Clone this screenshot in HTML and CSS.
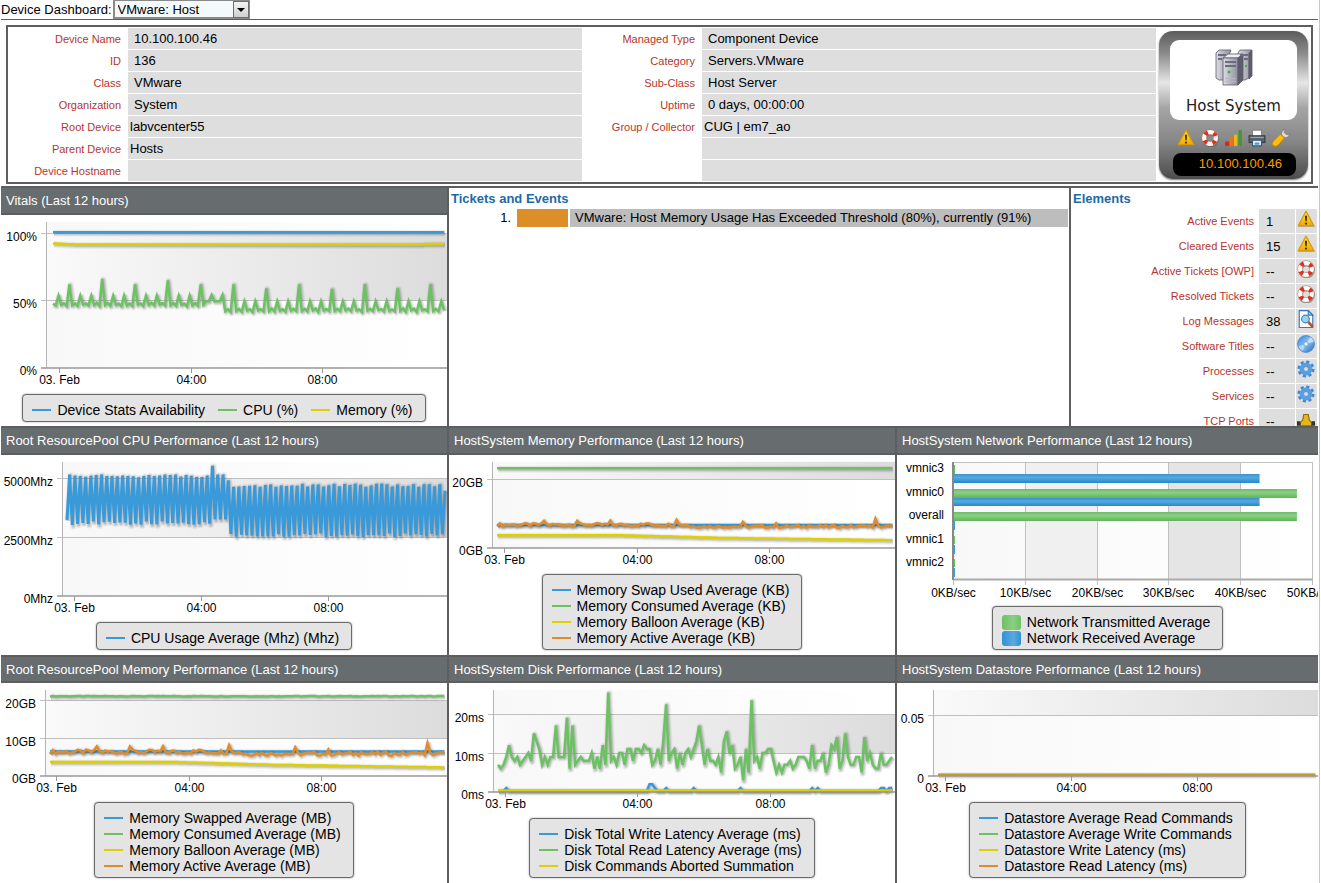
FILE: index.html
```
<!DOCTYPE html>
<html lang="en">
<head>
  <meta charset="UTF-8">
  <title>Device Dashboard</title>
  <link rel="stylesheet" href="styles.css">
</head>
<body>

  <!-- icons -->
  <svg class="defs" width="0" height="0">
    <defs>
      <linearGradient id="gold" x1="0" y1="0" x2="0" y2="1">
        <stop offset="0" stop-color="#ffe34a"/><stop offset="1" stop-color="#f0a800"/>
      </linearGradient>
      <linearGradient id="blue" x1="0" y1="0" x2="1" y2="1">
        <stop offset="0" stop-color="#2f7fd6"/><stop offset="0.5" stop-color="#8cc4f5"/><stop offset="1" stop-color="#1f63b8"/>
      </linearGradient>
      <linearGradient id="case" x1="0" y1="0" x2="1" y2="0">
        <stop offset="0" stop-color="#dcdce4"/><stop offset="1" stop-color="#8f8f9f"/>
      </linearGradient>
      <linearGradient id="plot">
        <stop offset="0" stop-color="#f8f8f8"/><stop offset="1" stop-color="#ffffff"/>
      </linearGradient>
      <linearGradient id="band">
        <stop offset="0" stop-color="#fafafa"/><stop offset="1" stop-color="#dcdcdc"/>
      </linearGradient>
      <linearGradient id="barGreen" x1="0" y1="0" x2="0" y2="1">
        <stop offset="0" stop-color="#6dbb66"/><stop offset="0.4" stop-color="#8bcf84"/><stop offset="1" stop-color="#5fb458"/>
      </linearGradient>
      <linearGradient id="barBlue" x1="0" y1="0" x2="0" y2="1">
        <stop offset="0" stop-color="#3a94d2"/><stop offset="0.4" stop-color="#57a9de"/><stop offset="1" stop-color="#2389cb"/>
      </linearGradient>
    </defs>
    <symbol id="i-warn" viewBox="0 0 16 16">
      <path d="M1 15h15L9 2z" fill="#777" opacity=".5"/>
      <path d="M8 1 15 14H1z" fill="url(#gold)" stroke="#d99a00" stroke-linejoin="round"/>
      <path d="M7 5h2l-.4 5H7.400z" fill="#4a3500"/><circle cx="8" cy="12" r="1" fill="#4a3500"/>
    </symbol>
    <symbol id="i-ring" viewBox="0 0 16 16">
      <circle cx="8.500" cy="8.900" r="5.300" fill="none" stroke="#555" stroke-width="4.400" opacity=".5"/>
      <circle cx="8" cy="8" r="5.200" fill="none" stroke="#8a7d74" stroke-width="4.600"/>
      <circle cx="8" cy="8" r="5.200" fill="none" stroke="#fffaf2" stroke-width="3.800"/>
      <circle cx="8" cy="8" r="5.200" fill="none" stroke="#e32d20" stroke-width="4" stroke-dasharray="3 5.168" stroke-dashoffset="-2.580"/>
    </symbol>
    <symbol id="i-bars" viewBox="0 0 16 16">
      <rect x="0" y="11" width="4" height="4" rx="1" fill="#d32a1a"/>
      <rect x="4" y="8" width="3" height="7" fill="#e8741c"/>
      <rect x="8" y="5" width="3" height="10" fill="#efb41c"/>
      <rect x="12" y="1" width="3" height="14" fill="#3f9a2c"/>
    </symbol>
    <symbol id="i-print" viewBox="0 0 16 16">
      <path d="M4 1h8v6H4z" fill="#fff" stroke="#888"/>
      <path d="M1 6h14v6H1z" fill="#5a6370" stroke="#333b45"/>
      <path d="M2 7h12v1H2z" fill="#9aa4b0"/>
      <path d="M4 10h8v5H4z" fill="#e6f3ff" stroke="#456"/>
      <path d="M6 12h4v2H6z" fill="#3da0dd"/>
    </symbol>
    <symbol id="i-wrench" viewBox="0 0 16 16">
      <path d="M15.500 4.500a3.500 3.500 0 0 1-5 2.800L8.700 5.500A3.500 3.500 0 0 1 12 .6L10.800 3l2 2z" fill="#ddd" stroke="#777" stroke-width=".7"/>
      <path d="M7.500 4.500 11 8 5.500 14.500Q3 16.500 1 14.600T1.500 10.500z" fill="#f8bd12" stroke="#b97a00" stroke-width=".7"/>
    </symbol>
    <symbol id="i-log" viewBox="0 0 16 16">
      <path d="M2 .5h8l4 4v11H2z" fill="#fff" stroke="#3a76b8"/>
      <path d="M10 .5v4h4z" fill="#a9cdf0" stroke="#3a76b8"/>
      <circle cx="7.500" cy="8" r="3.400" fill="#9fd0f2" stroke="#3c83bf"/>
      <path d="m10 10.500 4 4.500" stroke="#b5562a" stroke-width="2.500"/>
    </symbol>
    <symbol id="i-disc" viewBox="0 0 16 16">
      <circle cx="8" cy="8" r="7.500" fill="url(#blue)" stroke="#3c78bd" stroke-width=".6"/>
      <path d="M8 8 12 2a7 7 0 0 1 3 4z" fill="#d6ebfc" opacity=".8"/><path d="M8 8 1.500 10A7 7 0 0 0 5 14z" fill="#d6ebfc" opacity=".6"/>
      <circle cx="8" cy="8" r="2" fill="#e9f2fa" stroke="#5b92cc" stroke-width=".7"/>
    </symbol>
    <symbol id="i-gear" viewBox="0 0 16 16">
      <circle cx="8" cy="8" r="6.300" fill="none" stroke="#3f86d0" stroke-width="2.600" stroke-dasharray="2.700 2.248"/>
      <circle cx="8" cy="8" r="4" fill="none" stroke="#559fe6" stroke-width="3.400"/>
      <circle cx="8" cy="8" r="2.200" fill="#dedede" stroke="#3272b8" stroke-width=".6"/>
    </symbol>
    <symbol id="i-port" viewBox="0 0 16 16">
      <path d="M0 11h16v2H0z" fill="#777"/>
      <path d="M6 4h4l1 5 2 2v3H3v-3l2-2z" fill="#e5b71a" stroke="#8c6a10"/>
      <path d="M0 10h3v4H0zM13 10h3v4h-3z" fill="#333"/>
    </symbol>
    <symbol id="i-server" viewBox="0 0 38 38">
      <g stroke="#5b5b68" stroke-width=".8" stroke-linejoin="round">
        <path d="M1 4 4 1h12l-2 5v25H4l-3-2z" fill="url(#case)"/>
        <path d="M23 4 25 1h12l-3 3v25l-4 2h-7z" fill="url(#case)"/>
        <path d="m34 4 3-3v26l-3 3z" fill="#5c5c6c"/>
        <path d="m8 9 5-4h15l-5 4z" fill="#eeeef4"/>
        <path d="M8 9h15v27H8z" fill="url(#case)"/>
        <path d="m23 9 5-4v26l-5 5z" fill="#5c5c6c"/>
      </g>
      <path d="M10 12h11v2H10zM10 16h11v2H10zM3 5h8v2H3zM25 5h8v2h-8zM3 9h4v2H3zM29 9h4v2h-4z" fill="#6c6c80"/>
      <path d="M10 29h11v1H10zM10 32h11v1H10z" fill="#b5b5c4"/>
      <circle cx="14" cy="23" r="1.500" fill="#3cb42c"/><circle cx="31" cy="17" r="1.200" fill="#3cb42c"/>
    </symbol>
  </svg>

  <form class="topbar">
    <label for="dashboard">Device Dashboard:</label>
    <span class="picker">
      <select id="dashboard" name="dashboard">
        <option selected>VMware: Host</option>
      </select>
    </span>
  </form>

  <!-- device summary -->
  <div class="summary">
    <table class="info">
      <tr><th scope="row">Device Name</th><td>10.100.100.46</td></tr>
      <tr><th scope="row">ID</th><td>136</td></tr>
      <tr><th scope="row">Class</th><td>VMware</td></tr>
      <tr><th scope="row">Organization</th><td>System</td></tr>
      <tr><th scope="row">Root Device</th><td class="link"><a href="#">labvcenter55</a></td></tr>
      <tr><th scope="row">Parent Device</th><td class="link"><a href="#">Hosts</a></td></tr>
      <tr><th scope="row">Device Hostname</th><td></td></tr>
    </table>
    <table class="info">
      <tr><th scope="row">Managed Type</th><td>Component Device</td></tr>
      <tr><th scope="row">Category</th><td>Servers.VMware</td></tr>
      <tr><th scope="row">Sub-Class</th><td>Host Server</td></tr>
      <tr><th scope="row">Uptime</th><td>0 days, 00:00:00</td></tr>
      <tr><th scope="row">Group / Collector</th><td class="link">CUG | em7_ao</td></tr>
      <tr><th></th><td></td></tr>
      <tr><th></th><td></td></tr>
    </table>
    <div class="device">
      <div class="device-card">
        <svg width="38" height="38"><use href="#i-server"/></svg>
        <span>Host System</span>
      </div>
      <div class="device-tools">
        <a href="#" aria-label="Events"><svg class="icon"><use href="#i-warn"/></svg></a>
        <a href="#" aria-label="Tickets"><svg class="icon"><use href="#i-ring"/></svg></a>
        <a href="#" aria-label="Performance"><svg class="icon"><use href="#i-bars"/></svg></a>
        <a href="#" aria-label="Print"><svg class="icon"><use href="#i-print"/></svg></a>
        <a href="#" aria-label="Tools"><svg class="icon"><use href="#i-wrench"/></svg></a>
      </div>
      <div class="device-ip">10.100.100.46</div>
    </div>
  </div>

  <!-- row 1 -->
  <div class="row row-top">
    <div class="panel">
      <h2>Vitals (Last 12 hours)</h2>
      <svg class="chart chart-tall" id="vitals"></svg>
      <ul class="legend inline">
        <li class="c-blue">Device Stats Availability</li>
        <li class="c-green">CPU (%)</li>
        <li class="c-yellow">Memory (%)</li>
      </ul>
    </div>
    <div class="panel">
      <h3>Tickets and Events</h3>
      <ol class="events">
        <li><span class="num">1.</span><span class="severity"></span><a href="#">VMware: Host Memory Usage Has Exceeded Threshold (80%), currently (91%)</a></li>
      </ol>
    </div>
    <div class="panel">
      <h3>Elements</h3>
      <div class="scroll">
        <table class="elements">
          <tr><th scope="row">Active Events</th><td>1</td><td class="ico"><svg class="icon"><use href="#i-warn"/></svg></td></tr>
          <tr><th scope="row">Cleared Events</th><td>15</td><td class="ico"><svg class="icon"><use href="#i-warn"/></svg></td></tr>
          <tr><th scope="row">Active Tickets [OWP]</th><td>--</td><td class="ico"><svg class="icon"><use href="#i-ring"/></svg></td></tr>
          <tr><th scope="row">Resolved Tickets</th><td>--</td><td class="ico"><svg class="icon"><use href="#i-ring"/></svg></td></tr>
          <tr><th scope="row">Log Messages</th><td>38</td><td class="ico"><svg class="icon"><use href="#i-log"/></svg></td></tr>
          <tr><th scope="row">Software Titles</th><td>--</td><td class="ico"><svg class="icon"><use href="#i-disc"/></svg></td></tr>
          <tr><th scope="row">Processes</th><td>--</td><td class="ico"><svg class="icon"><use href="#i-gear"/></svg></td></tr>
          <tr><th scope="row">Services</th><td>--</td><td class="ico"><svg class="icon"><use href="#i-gear"/></svg></td></tr>
          <tr><th scope="row">TCP Ports</th><td>--</td><td class="ico"><svg class="icon"><use href="#i-port"/></svg></td></tr>
        </table>
      </div>
    </div>
  </div>

  <!-- row 2 -->
  <div class="row">
    <div class="panel">
      <h2>Root ResourcePool CPU Performance (Last 12 hours)</h2>
      <svg class="chart" id="poolCpu"></svg>
      <ul class="legend">
        <li class="c-blue">CPU Usage Average (Mhz) (Mhz)</li>
      </ul>
    </div>
    <div class="panel">
      <h2>HostSystem Memory Performance (Last 12 hours)</h2>
      <svg class="chart chart-short" id="hostMemory"></svg>
      <ul class="legend">
        <li class="c-blue">Memory Swap Used Average (KB)</li>
        <li class="c-green">Memory Consumed Average (KB)</li>
        <li class="c-yellow">Memory Balloon Average (KB)</li>
        <li class="c-orange">Memory Active Average (KB)</li>
      </ul>
    </div>
    <div class="panel">
      <h2>HostSystem Network Performance (Last 12 hours)</h2>
      <svg class="chart chart-mid" id="network"></svg>
      <ul class="legend boxes">
        <li class="c-green">Network Transmitted Average</li>
        <li class="c-blue">Network Received Average</li>
      </ul>
    </div>
  </div>

  <!-- row 3 -->
  <div class="row row-last">
    <div class="panel">
      <h2>Root ResourcePool Memory Performance (Last 12 hours)</h2>
      <svg class="chart chart-short" id="poolMemory"></svg>
      <ul class="legend">
        <li class="c-blue">Memory Swapped Average (MB)</li>
        <li class="c-green">Memory Consumed Average (MB)</li>
        <li class="c-yellow">Memory Balloon Average (MB)</li>
        <li class="c-orange">Memory Active Average (MB)</li>
      </ul>
    </div>
    <div class="panel">
      <h2>HostSystem Disk Performance (Last 12 hours)</h2>
      <svg class="chart chart-low" id="disk"></svg>
      <ul class="legend">
        <li class="c-blue">Disk Total Write Latency Average (ms)</li>
        <li class="c-green">Disk Total Read Latency Average (ms)</li>
        <li class="c-yellow">Disk Commands Aborted Summation</li>
      </ul>
    </div>
    <div class="panel">
      <h2>HostSystem Datastore Performance (Last 12 hours)</h2>
      <svg class="chart chart-short" id="datastore"></svg>
      <ul class="legend">
        <li class="c-blue">Datastore Average Read Commands</li>
        <li class="c-green">Datastore Average Write Commands</li>
        <li class="c-yellow">Datastore Write Latency (ms)</li>
        <li class="c-orange">Datastore Read Latency (ms)</li>
      </ul>
    </div>
  </div>

  <script src="charts.js"></script>
</body>
</html>
```
FILE: styles.css
```
body {
  margin: 0 1px;
  padding-right: 1px;
  border-right: 1px solid #c3c8d0;
  font-family: Arial, "Liberation Sans", sans-serif;
  font-size: 13px;
  color: #000;
  background: #fff;
}
.defs {
  position: absolute;
}
h2, h3, ul, ol {
  margin: 0;
  padding: 0;
  list-style: none;
}
a {
  color: inherit;
  text-decoration: none;
}
.icon {
  display: block;
  width: 18px;
  height: 18px;
}

/* top bar */
.topbar {
  display: flex;
  align-items: center;
  gap: 1px;
  height: 19px;
  border-bottom: 1px solid #5e5e5e;
}
.picker {
  position: relative;
}
.picker select {
  display: block;
  width: 137px;
  height: 19px;
  padding: 0 3px;
  border: 2px solid #8a8a8a;
  border-top-width: 1px;
  border-radius: 0;
  background: #f4f9fb;
  color: #000;
  font: 13px Arial, "Liberation Sans", sans-serif;
  appearance: none;
}
.picker::before {
  content: "";
  position: absolute;
  top: 1px;
  right: 1px;
  width: 14px;
  height: 15px;
  border: 1px solid #6e6e6e;
  background: linear-gradient(#f4f4f4, #cfcfcf);
  pointer-events: none;
}
.picker::after {
  content: "";
  position: absolute;
  top: 8px;
  right: 5px;
  border: 4px solid transparent;
  border-top-color: #000;
  border-bottom-width: 0;
  pointer-events: none;
}

/* device summary */
.summary {
  display: grid;
  grid-template-columns: 1fr 1fr 155px;
  margin: 5px 5px 2px;
  padding: 1px 0 0;
  border: 2px solid #5e5e5e;
}
.info {
  width: 100%;
  border-collapse: collapse;
  table-layout: fixed;
}
.info th {
  width: 113px;
  height: 21px;
  padding: 0 7px 0 0;
  border-bottom: 1px solid #fff;
  color: #b5352c;
  font-size: 11px;
  font-weight: normal;
  text-align: right;
}
.info td {
  padding: 0 6px;
  border-bottom: 1px solid #fff;
  background: #dedede;
}
.info td.link {
  padding: 0 2px;
}
.device {
  box-sizing: border-box;
  height: 148px;
  margin: 3px 3px 0;
  padding: 9px 11px 0;
  border-radius: 14px;
  background: linear-gradient(#5c5c5c, #8a8a8a 15%, #e6e6e6 35%, #a5a5a5 52%, #868686 75%, #4c4c4c);
  box-shadow: 0 1px 2px #777;
}
.device-card {
  display: flex;
  flex-direction: column;
  align-items: center;
  gap: 9px;
  height: 71px;
  padding-top: 9px;
  border-radius: 9px;
  background: #fff;
  font: 15px/20px "DejaVu Sans", sans-serif;
  color: #222;
}
.device-tools {
  display: flex;
  justify-content: space-between;
  padding: 9px 7px 6px;
}
.device-ip {
  height: 23px;
  margin: 0 1px 0 3px;
  padding-right: 14px;
  border-radius: 8px;
  background: #000;
  color: #ff9a00;
  line-height: 21px;
  text-align: right;
}

/* panels */
.row {
  display: grid;
  grid-template-columns: 448fr 448fr 421fr;
  min-height: 229px;
}
.row-top {
  grid-template-columns: 448fr 622fr 247fr;
  height: 240px;
}
.row-last {
  min-height: 228px;
}
.panel {
  display: flex;
  flex-direction: column;
  min-width: 0;
  min-height: 0;
  border-top: 2px solid #5e5e5e;
  border-right: 2px solid #5e5e5e;
}
.panel:last-child {
  border-right: none;
}
.panel h2 {
  padding: 1px 5px 0;
  border-bottom: 2px solid #5e5e5e;
  background: #676d6f;
  color: #fff;
  font-size: 13px;
  font-weight: normal;
  line-height: 24px;
}
.row-last h2 {
  line-height: 23px;
}
.panel h3 {
  padding: 2px 2px 1px;
  color: #1c6ba5;
  font-size: 13px;
  line-height: 18px;
}

/* charts */
.chart {
  display: block;
  width: 100%;
  height: 160px;
  overflow: hidden;
  font-size: 12px;
}
.chart-tall {
  height: 175px;
}
.chart-mid {
  height: 145px;
}
.chart-low {
  height: 130px;
}
.chart-short {
  height: 115px;
}
.legend {
  align-self: center;
  margin: auto 0 5px;
  padding: 7px 12px 3px 9px;
  border: 1px solid #6a6a6a;
  border-radius: 4px;
  background: #e4e4e4;
  box-shadow: 0 0 2px #999;
  font-size: 14px;
  line-height: 16px;
}
.legend.inline {
  display: flex;
  gap: 13px;
  margin-bottom: 4px;
}
.legend li {
  display: flex;
  align-items: center;
  gap: 6px;
}
.legend li::before {
  content: "";
  width: 19px;
  height: 2px;
  background: currentColor;
}
.legend.boxes li::before {
  height: 15px;
  border-radius: 3px;
}
.legend .c-blue::before { background: #3a9ad9; }
.legend .c-green::before { background: #6cc163; }
.legend .c-yellow::before { background: #ddcf00; }
.legend .c-orange::before { background: #e08c2b; }
.legend.boxes .c-green::before { background: linear-gradient(90deg, #6cc163, #8bcf84 60%, #6cc163); }
.legend.boxes .c-blue::before { background: linear-gradient(90deg, #2c92d3, #5aaade 60%, #2c92d3); }

/* tickets */
.events li {
  display: flex;
  gap: 2px;
  height: 18px;
  line-height: 18px;
}
.events .num {
  width: 62px;
  padding-right: 4px;
  text-align: right;
}
.events .severity {
  width: 51px;
  background: #dc8e28;
}
.events a {
  flex: 1;
  margin-right: 1px;
  padding-left: 5px;
  background: #bdbdbd;
}

/* elements */
.scroll {
  flex: 1;
  min-height: 0;
  margin-right: 1px;
  overflow: hidden;
}
.elements {
  width: 100%;
  border-collapse: collapse;
}
.elements th {
  padding: 0 5px 0 0;
  border-bottom: 1px solid #fff;
  color: #b5352c;
  font-size: 11px;
  font-weight: normal;
  text-align: right;
}
.elements td {
  width: 29px;
  height: 24px;
  padding: 0 0 0 7px;
  border-bottom: 1px solid #fff;
  background: #dedede;
}
.elements td.ico {
  width: 20px;
  padding: 1px 0 0 1px;
  height: 23px;
  border-left: 1px solid #fff;
  vertical-align: top;
}
```
FILE: charts.js
```
const BLUE = "#3a9ad9", GREEN = "#6cc163", YELLOW = "#ddcf00", ORANGE = "#e08c2b";
const POINTS = 144; // 12 hours, one sample every 5 minutes

// build a series from a function of the sample index
function series(fn) {
  return Array.from({ length: POINTS }, (_, i) => fn(i));
}
// small repeatable noise, -1..1
function noise(i) {
  const n = Math.sin(i * 12.9898) * 43758.5453;
  return (n - Math.floor(n)) * 2 - 1;
}

const bigPeaks = [62, 66, 62, 65, 62, 62, 59, 62, 58.500, 62, 59, 62];
const cpuPct = series(i => {
  const base = i < 63 ? 47.500 : 43.300;
  if (i % 12 === 6) return bigPeaks[(i - 6) / 12];
  if (i % 4 === 2) return i > 54 && i < 63 ? 54 : base + 6;
  if (i > 55 && i < 63) return 49.500;
  return base + [0.5, -1.5, 0, -0.8][i % 4] + noise(i) * 0.400;
});

const poolMhz = series(i => {
  if (i === 0) return 3230;
  if (i === 55) return 5520;
  if (i === 61) return 4900;
  if (i === 143) return 4460;
  if (i > 55 && i < 61) return i % 2 ? 5150 : 3250;
  if (i < 62) return i % 2 ? 5090 + noise(i) * 60 : 3080 + noise(i) * 80;
  return i % 2 ? 4690 + noise(i) * 70 : 2580 + noise(i) * 80;
});

const memPeaks = { 17: 1.500, 29: 1.500, 41: 1, 54: 0.6, 65: 2.200, 89: 1.200, 101: 0.6, 113: 0.9, 133: 0.9, 137: 2.500 };
function activeMem(amp) {
  return series(i => (i < 70 ? 6.400 : 5.900) + noise(i) * 0.550 * amp + (memPeaks[i] || 0) * amp);
}
function balloon(i) {
  return i < 45 ? 3.700 : i < 80 ? 3.700 - (i - 45) * 0.021 : 2.960 - (i - 80) * 0.011;
}

const diskRead = [7,6,7,9,12,9,8,9,7,8,9,10,8,15,13,11,7,9,7,9,9,17,9,9,9,19,6,17,7,8,9,8,8,8,10,6,
  9,6,12,7,25.500,8,9,7,10,10,7,11,11,8,11,11,10,12,11,11,7,8,11,7,13,22.500,8,10,11,6,10,7,10,11,9,11,
  13,17,12,7,11,8,8,7,9,5,13,15.500,10,12,6,7,9,3,11,5,23.500,8,9,6,10,10,11,11,8,5,7,5,7,7,8,6,
  7,9,9,9,8,6,12,6,8,8,10,5,7,12,11,14,6,8,15,9,7,7,9,9,5,14,8,10,7,6,6,10,7,7,8,9];
const writeBumps = { 3: 1, 55: 2, 56: 2, 57: 1, 61: 1, 71: 1, 88: 1, 114: 1, 116: 1, 139: 1, 140: 1, 142: 1, 143: 1 };

// width: width the x positions are given for; unit: px per one value
const lineCharts = {
  vitals: {
    width: 446, left: 45, top: 7, bottom: 153, unit: 1.350, from: 52, to: 443,
    grid: [[100, "100%"], [50, "50%"]], zero: "0%", band: [100, 50],
    ticks: [58, 190, 321],
    lines: [[BLUE, series(() => 100.500)], [GREEN, cpuPct], [YELLOW, series(i => 91.500 + Math.max(0, 8 - i) * 0.1 + (i > 135 ? 0.4 : 0))]]
  },
  poolCpu: {
    width: 446, left: 61, top: 7, bottom: 141, unit: 0.0236, from: 66, to: 444, stroke: 3,
    grid: [[5000, "5000Mhz"], [2500, "2500Mhz"]], zero: "0Mhz", band: [5000, 2500],
    ticks: [73, 200, 327],
    lines: [[BLUE, poolMhz]]
  },
  hostMemory: {
    width: 446, left: 43, top: 7, bottom: 93, unit: 3.420, from: 48, to: 443,
    grid: [[20, "20GB"]], zero: "0GB", band: [25.200, 20],
    ticks: [55, 188, 320],
    lines: [[BLUE, series(() => 6.700)], [GREEN, series(() => 23.300)], [YELLOW, series(balloon)],
      [ORANGE, activeMem(0.8).map(v => v + 0.400)]]
  },
  poolMemory: {
    width: 446, left: 44, top: 7, bottom: 93, unit: 3.780, from: 49, to: 443,
    grid: [[20, "20GB"], [10, "10GB"]], zero: "0GB", band: [20, 10],
    ticks: [55, 188, 320],
    lines: [[BLUE, series(() => 6.500)], [GREEN, series(i => 21.100 + noise(i) * 0.050)], [YELLOW, series(balloon)],
      [ORANGE, activeMem(1)]]
  },
  disk: {
    width: 446, left: 44, top: 7, bottom: 109, unit: 3.900, from: 49, to: 443,
    grid: [[20, "20ms"], [10, "10ms"]], zero: "0ms", band: [20, 10],
    ticks: [56, 188, 321],
    lines: [[BLUE, series(i => writeBumps[i] || 0.2)], [GREEN, diskRead], [YELLOW, series(() => 0.4)]]
  },
  datastore: {
    width: 421, left: 36, top: 7, bottom: 93, unit: 1220, from: 41, to: 418,
    grid: [[0.05, "0.05"]], zero: "0", band: [0.0705, 0.05],
    ticks: [48, 174, 300],
    lines: [["#c39a2c", series(() => 0.001)]]
  }
};

function text(x, y, anchor, label) {
  return `<text x="${x}" y="${y}" text-anchor="${anchor}">${label}</text>`;
}
function line(x1, y1, x2, y2, color, w = 1) {
  return `<path d="M${x1} ${y1}L${x2} ${y2}" stroke="${color}" stroke-width="${w}" fill="none"/>`;
}
function rect(x, y, w, h, fill) {
  return `<rect x="${x}" y="${y}" width="${w}" height="${h}" fill="${fill}"/>`;
}

function drawLines(id, c) {
  const svg = document.getElementById(id);
  const w = svg.clientWidth;
  const k = (w - c.left) / (c.width - c.left);
  const px = x => c.left + (x - c.left) * k;
  const py = v => c.bottom - v * c.unit;

  let out = rect(c.left, c.top, w - c.left, c.bottom - c.top, "url(#plot)");
  out += rect(c.left, py(c.band[0]), w - c.left, py(c.band[1]) - py(c.band[0]), "url(#band)");
  c.grid.forEach(([v, label]) => {
    const y = Math.floor(py(v)) + 0.5;
    out += line(c.left - 5, y, w, y, "#c0c0c0") + text(c.left - 9, y + 7, "end", label);
  });
  out += text(c.left - 9, c.bottom + 7, "end", c.zero);
  out += line(c.left + 0.5, c.top, c.left + 0.5, c.bottom, "#b4b4b4");

  c.lines.forEach(([color, data]) => {
    const step = (c.to - c.from) / (data.length - 1);
    const pts = data.map((v, i) => px(c.from + i * step).toFixed(1) + "," + py(v).toFixed(1)).join(" ");
    [[7, 0.05], [5, 0.07], [3, 0.12]].forEach(([sw, o]) => {
      out += `<polyline points="${pts}" transform="translate(1 1)" fill="none" stroke="#000" stroke-width="${sw}" stroke-linejoin="round" opacity="${o}"/>`;
    });
    out += `<polyline points="${pts}" fill="none" stroke="${color}" stroke-width="${c.stroke || 2.500}"/>`;
  });

  out += line(c.left - 5, c.bottom, w, c.bottom, "#999", 1.500);
  ["03. Feb", "04:00", "08:00"].forEach((label, i) => {
    const x = Math.round(px(c.ticks[i])) + 0.5;
    out += line(x, c.bottom, x, c.bottom + 5, "#999") + text(x, c.bottom + 16, "middle", label);
  });
  svg.innerHTML = out;
}

function drawNetwork() {
  const svg = document.getElementById("network");
  const w = svg.clientWidth, left = 56, top = 7, bottom = 125;
  const unit = (w - 6 - left) / 50;
  const x = v => Math.round(left + v * unit) + 0.5;

  let out = rect(left, top, w - 6 - left, bottom - top, "url(#plot)");
  out += rect(x(10), top, 10 * unit, bottom - top, "#f0f0f0");
  out += rect(x(30), top, 10 * unit, bottom - top, "#e5e5e5");
  out += line(left, top + 0.5, x(50), top + 0.5, "#c0c0c0");
  for (let v = 0; v <= 50; v += 10) {
    out += line(x(v), top, x(v), bottom + 5, "#c0c0c0") + text(x(v), bottom + 17, "middle", v + "KB/sec");
  }
  const bars = [[19, 42.700, "barBlue"], [34, 47.900, "barGreen"], [43, 42.700, "barBlue"], [57, 47.900, "barGreen"]];
  bars.forEach(([y, v, fill]) => { out += rect(left, y, v * unit, y === 43 ? 8 : 9, `url(#${fill})`); });
  // idle adapters
  out += rect(left, 10, 2, 9, GREEN) + rect(left, 66, 2, 9, BLUE);
  out += rect(left, 81, 2, 8, GREEN) + rect(left, 90, 2, 9, BLUE) + rect(left, 104, 2, 8, GREEN) + rect(left, 113, 2, 9, BLUE);
  out += line(left, bottom - 0.500, x(50), bottom - 0.500, "#aaa", 2);
  out += line(left, top, left, bottom, "#888", 2);
  ["vmnic3", "vmnic0", "overall", "vmnic1", "vmnic2"].forEach((name, i) => {
    out += text(left - 9, Math.round(17 + i * 23.500), "end", name);
  });
  svg.innerHTML = out;
}

function drawAll() {
  Object.entries(lineCharts).forEach(([id, c]) => drawLines(id, c));
  drawNetwork();
}
drawAll();
window.addEventListener("resize", drawAll);
```
